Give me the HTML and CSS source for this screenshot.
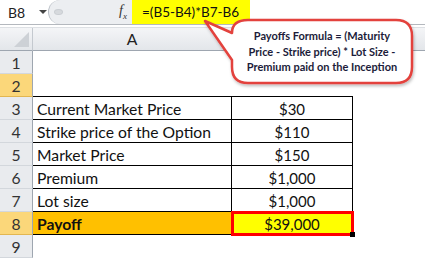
FILE: index.html
```html
<!DOCTYPE html>
<html lang="en">
<head>
	<meta charset="UTF-8">
	<title>Payoff</title>
	<link rel="stylesheet" href="styles.css">
</head>
<body>
	<div class="formula-bar">
		<div class="name-box"><span>B8</span><span class="caret"></span></div>
		<div class="fx-area">
			<span class="knob"></span>
			<span class="fx">f<sub>x</sub></span>
		</div>
		<div class="formula">=(B5-B4)*B7-B6</div>
		<div class="formula-rest"></div>
	</div>
	<div class="sheet">
		<div class="corner"><span class="tri"></span></div>
		<div class="col-head">A</div>
		<div class="col-head"></div>
		<div class="col-head blank"></div>

		<div class="row-head">1</div><div class="cell"></div><div class="cell"></div><div class="cell"></div>
		<div class="row-head sel">2</div><div class="cell"></div><div class="cell"></div><div class="cell"></div>

		<div class="row-head">3</div><div class="cell boxed top">Current Market Price</div><div class="cell boxed top num">$30</div><div class="cell"></div>
		<div class="row-head">4</div><div class="cell boxed">Strike price of the Option</div><div class="cell boxed num">$110</div><div class="cell"></div>
		<div class="row-head">5</div><div class="cell boxed">Market Price</div><div class="cell boxed num">$150</div><div class="cell"></div>
		<div class="row-head">6</div><div class="cell boxed">Premium</div><div class="cell boxed num">$1,000</div><div class="cell"></div>
		<div class="row-head">7</div><div class="cell boxed">Lot size</div><div class="cell boxed num">$1,000</div><div class="cell"></div>
		<div class="row-head sel">8</div><div class="cell boxed payoff">Payoff</div><div class="cell boxed num result">$39,000</div><div class="cell"></div>
		<div class="row-head">9</div><div class="cell"></div><div class="cell"></div><div class="cell"></div>
	</div>

	<div class="callout">
		<svg class="bubble" width="225" height="80" viewBox="200 12 225 80">
			<defs>
				<filter id="sh" x="-10%" y="-10%" width="130%" height="140%">
					<feDropShadow dx="1" dy="2" stdDeviation="1.5" flood-color="#000" flood-opacity="0.25"/>
				</filter>
			</defs>
			<path filter="url(#sh)" d="M248 20 H396 Q412 20 412 36 V67 Q412 83 396 83 H248 Q232 83 232 67 V60 L205 21 L232 33 Q232 20 248 20 Z" fill="#fff" stroke="#e3423d" stroke-width="2.5" stroke-linejoin="round"/>
		</svg>
		<div class="callout-text">Payoffs Formula = (Maturity<br>Price - Strike price) * Lot Size -<br>Premium paid on the Inception</div>
	</div>
</body>
</html>
```
FILE: styles.css
```css
*{
	margin: 0;
	padding: 0;
	box-sizing: border-box;
}
body{
	width: 425px;
	height: 258px;
	overflow: hidden;
	background: #fff;
	font-family: Lato, "Liberation Sans", sans-serif;
	color: #111;
	position: relative;
}
.formula-bar{
	display: flex;
	height: 25px;
	border-bottom: 1px solid #b4b8be;
	background: #fff;
}
.name-box{
	width: 48px;
	display: flex;
	align-items: center;
	padding-left: 8px;
	font-size: 14px;
	color: #222;
}
.caret{
	margin-left: 14px;
	border-left: 4px solid transparent;
	border-right: 4px solid transparent;
	border-top: 4px solid #444;
}
.fx-area{
	width: 84px;
	display: flex;
	align-items: center;
	justify-content: space-between;
	background: #eceef1;
	border-left: 1px solid #b9bfc6;
	border-radius: 12px 0 0 12px;
	padding: 0 5px 0 5px;
}
.knob{
	width: 9px;
	height: 6px;
	border-radius: 50%;
	background: #d6d9dd;
	border: 1px solid #c9cdd2;
}
.fx{
	font-family: "Liberation Serif", serif;
	font-style: italic;
	font-size: 14px;
	color: #333;
}
.fx sub{
	font-size: 9px;
}
.formula{
	width: 118px;
	background: #ffff00;
	font-size: 13.5px;
	line-height: 24px;
	padding-left: 10px;
	color: #111;
}
.formula-rest{
	flex: 1;
}
.sheet{
	margin-top: 2px;
	border-top: 1px solid #dde0e4;
	display: grid;
	grid-template-columns: 33px 199px 121px 1fr;
	grid-auto-rows: 23px;
	font-size: 15.7px;
}
.corner, .col-head{
	background: linear-gradient(#f4f5f7, #e3e6ea);
	border-bottom: 1px solid #9ea6b0;
	border-right: 1px solid #c4c9cf;
}
.corner{
	position: relative;
}
.tri{
	position: absolute;
	right: 3px;
	bottom: 3px;
	border-left: 15px solid transparent;
	border-bottom: 15px solid #cdd1d6;
}
.col-head{
	text-align: center;
	line-height: 22px;
	color: #222;
}
.col-head.blank{
	border-right: 0;
}
.row-head{
	background: #e9ebee;
	border-right: 1px solid #9ea6b0;
	border-bottom: 1px solid #d3d7dc;
	text-align: center;
	line-height: 24px;
	color: #333;
}
.row-head.sel{
	background: #fbd77a;
	border-bottom-color: #e2b650;
}
.cell{
	line-height: 24px;
	padding-left: 4px;
	white-space: nowrap;
}
.boxed{
	border-right: 1px solid #000;
	border-bottom: 1px solid #000;
}
.boxed.top{
	border-top: 1px solid #000;
	margin-top: -1px;
}
.num{
	text-align: center;
	padding-left: 0;
	font-size: 15px;
}
.payoff{
	background: #ffc000;
	font-weight: bold;
}
.result{
	background: #ffff00;
	outline: 3px solid #ff0000;
	outline-offset: -2px;
	position: relative;
}
.result::after{
	content: "";
	position: absolute;
	right: -3px;
	bottom: -3px;
	width: 5px;
	height: 5px;
	background: #000;
}
.callout{
	position: absolute;
	left: 200px;
	top: 12px;
	width: 225px;
	height: 80px;
}
.bubble{
	position: absolute;
	left: 0;
	top: 0;
}
.callout-text{
	position: absolute;
	left: 32px;
	top: 16px;
	width: 180px;
	text-align: center;
	font-size: 11px;
	font-weight: bold;
	line-height: 15.5px;
	color: #1c1c3a;
}
```
